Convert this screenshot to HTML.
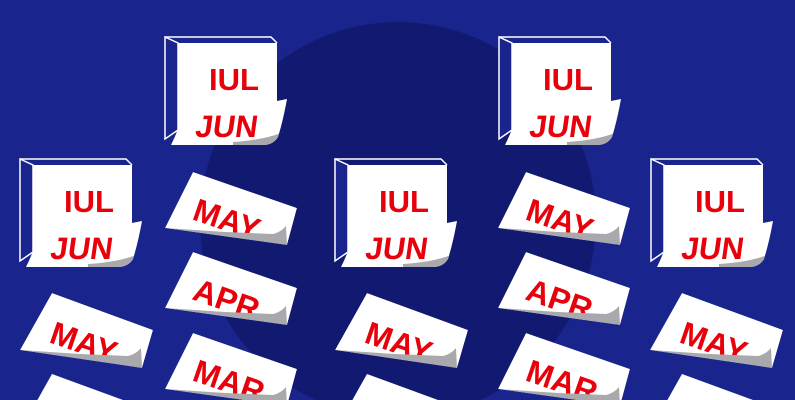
<!DOCTYPE html>
<html><head><meta charset="utf-8"><style>
html,body{margin:0;padding:0;width:795px;height:400px;overflow:hidden;background:#19258d}
svg{display:block}
text{font-family:"Liberation Sans",sans-serif;font-weight:bold;fill:#e8000b}
</style></head><body>
<svg width="795" height="400" viewBox="0 0 795 400" xmlns="http://www.w3.org/2000/svg">
<defs>
<clipPath id="sa"><polygon points="28,0 132,36 122,73 0,56"/></clipPath>
<clipPath id="sb"><polygon points="32,0 133,37 122,75 0,57"/></clipPath>
<clipPath id="pc"><path d="M15,10 L114,10 L114,68 L124,66 Q120,88 115,104 Q110,112 100,112 L8,112 Q12,104 15,96 Z"/></clipPath>
</defs>
<rect width="795" height="400" fill="#19258d"/>
<circle cx="398" cy="220" r="198" fill="#111a70"/>

<g transform="translate(165,172)"><g clip-path="url(#sa)"><polygon points="28,0 132,36 122,73 0,56" fill="#fff"/><text x="26" y="47" font-size="32" transform="rotate(19 26 47)">MAY</text><path d="M0,56 L60,60 L108,62 Q116,60 121,54 L122,73 Z" fill="#a9a9ad"/></g></g>
<g transform="translate(165,252)"><g clip-path="url(#sa)"><polygon points="28,0 132,36 122,73 0,56" fill="#fff"/><text x="26" y="47" font-size="32" transform="rotate(19 26 47)">APR</text><path d="M0,56 L60,60 L108,62 Q116,60 121,54 L122,73 Z" fill="#a9a9ad"/></g></g>
<g transform="translate(165,333)"><g clip-path="url(#sa)"><polygon points="28,0 132,36 122,73 0,56" fill="#fff"/><text x="26" y="47" font-size="32" transform="rotate(19 26 47)">MAR</text><path d="M0,56 L60,60 L108,62 Q116,60 121,54 L122,73 Z" fill="#a9a9ad"/></g></g>

<g transform="translate(498,172)"><g clip-path="url(#sa)"><polygon points="28,0 132,36 122,73 0,56" fill="#fff"/><text x="26" y="47" font-size="32" transform="rotate(19 26 47)">MAY</text><path d="M0,56 L60,60 L108,62 Q116,60 121,54 L122,73 Z" fill="#a9a9ad"/></g></g>
<g transform="translate(498,252)"><g clip-path="url(#sa)"><polygon points="28,0 132,36 122,73 0,56" fill="#fff"/><text x="26" y="47" font-size="32" transform="rotate(19 26 47)">APR</text><path d="M0,56 L60,60 L108,62 Q116,60 121,54 L122,73 Z" fill="#a9a9ad"/></g></g>
<g transform="translate(498,333)"><g clip-path="url(#sa)"><polygon points="28,0 132,36 122,73 0,56" fill="#fff"/><text x="26" y="47" font-size="32" transform="rotate(19 26 47)">MAR</text><path d="M0,56 L60,60 L108,62 Q116,60 121,54 L122,73 Z" fill="#a9a9ad"/></g></g>

<g transform="translate(20,293)"><g clip-path="url(#sb)"><polygon points="32,0 133,37 122,75 0,57" fill="#fff"/><text x="28" y="49" font-size="32" transform="rotate(19 28 49)">MAY</text><path d="M0,57 L60,61 L108,63 Q116,61 121,55 L122,75 Z" fill="#a9a9ad"/></g></g>
<g transform="translate(20,374)"><polygon points="32,0 133,37 122,75 0,57" fill="#fff"/></g>
<g transform="translate(335,293)"><g clip-path="url(#sb)"><polygon points="32,0 133,37 122,75 0,57" fill="#fff"/><text x="28" y="49" font-size="32" transform="rotate(19 28 49)">MAY</text><path d="M0,57 L60,61 L108,63 Q116,61 121,55 L122,75 Z" fill="#a9a9ad"/></g></g>
<g transform="translate(335,374)"><polygon points="32,0 133,37 122,75 0,57" fill="#fff"/></g>
<g transform="translate(650,293)"><g clip-path="url(#sb)"><polygon points="32,0 133,37 122,75 0,57" fill="#fff"/><text x="28" y="49" font-size="32" transform="rotate(19 28 49)">MAY</text><path d="M0,57 L60,61 L108,63 Q116,61 121,55 L122,75 Z" fill="#a9a9ad"/></g></g>
<g transform="translate(650,374)"><polygon points="32,0 133,37 122,75 0,57" fill="#fff"/></g>

<g transform="translate(163,33)">
<polyline points="2,4 108,4 114,10" fill="none" stroke="#fff" stroke-width="1.5"/>
<polygon points="2,4 15,10 15,97 2,106" fill="#19258d" stroke="#fff" stroke-width="1.5"/>
<g clip-path="url(#pc)"><rect x="0" y="0" width="130" height="120" fill="#fff"/>
<text x="46" y="57" font-size="31">IUL</text>
<text x="46" y="104" font-size="31" transform="skewX(-8)">JUN</text>
<path d="M70,109 Q100,107 118,100 Q114,110 104,114 L70,114Z" fill="#a9a9ad"/></g>
</g>
<g transform="translate(497,33)">
<polyline points="2,4 108,4 114,10" fill="none" stroke="#fff" stroke-width="1.5"/>
<polygon points="2,4 15,10 15,97 2,106" fill="#19258d" stroke="#fff" stroke-width="1.5"/>
<g clip-path="url(#pc)"><rect x="0" y="0" width="130" height="120" fill="#fff"/>
<text x="46" y="57" font-size="31">IUL</text>
<text x="46" y="104" font-size="31" transform="skewX(-8)">JUN</text>
<path d="M70,109 Q100,107 118,100 Q114,110 104,114 L70,114Z" fill="#a9a9ad"/></g>
</g>
<g transform="translate(18,155)">
<polyline points="2,4 108,4 114,10" fill="none" stroke="#fff" stroke-width="1.5"/>
<polygon points="2,4 15,10 15,97 2,106" fill="#19258d" stroke="#fff" stroke-width="1.5"/>
<g clip-path="url(#pc)"><rect x="0" y="0" width="130" height="120" fill="#fff"/>
<text x="46" y="57" font-size="31">IUL</text>
<text x="46" y="104" font-size="31" transform="skewX(-8)">JUN</text>
<path d="M70,109 Q100,107 118,100 Q114,110 104,114 L70,114Z" fill="#a9a9ad"/></g>
</g>
<g transform="translate(333,155)">
<polyline points="2,4 108,4 114,10" fill="none" stroke="#fff" stroke-width="1.5"/>
<polygon points="2,4 15,10 15,97 2,106" fill="#19258d" stroke="#fff" stroke-width="1.5"/>
<g clip-path="url(#pc)"><rect x="0" y="0" width="130" height="120" fill="#fff"/>
<text x="46" y="57" font-size="31">IUL</text>
<text x="46" y="104" font-size="31" transform="skewX(-8)">JUN</text>
<path d="M70,109 Q100,107 118,100 Q114,110 104,114 L70,114Z" fill="#a9a9ad"/></g>
</g>
<g transform="translate(649,155)">
<polyline points="2,4 108,4 114,10" fill="none" stroke="#fff" stroke-width="1.5"/>
<polygon points="2,4 15,10 15,97 2,106" fill="#19258d" stroke="#fff" stroke-width="1.5"/>
<g clip-path="url(#pc)"><rect x="0" y="0" width="130" height="120" fill="#fff"/>
<text x="46" y="57" font-size="31">IUL</text>
<text x="46" y="104" font-size="31" transform="skewX(-8)">JUN</text>
<path d="M70,109 Q100,107 118,100 Q114,110 104,114 L70,114Z" fill="#a9a9ad"/></g>
</g>
</svg>
</body></html>
